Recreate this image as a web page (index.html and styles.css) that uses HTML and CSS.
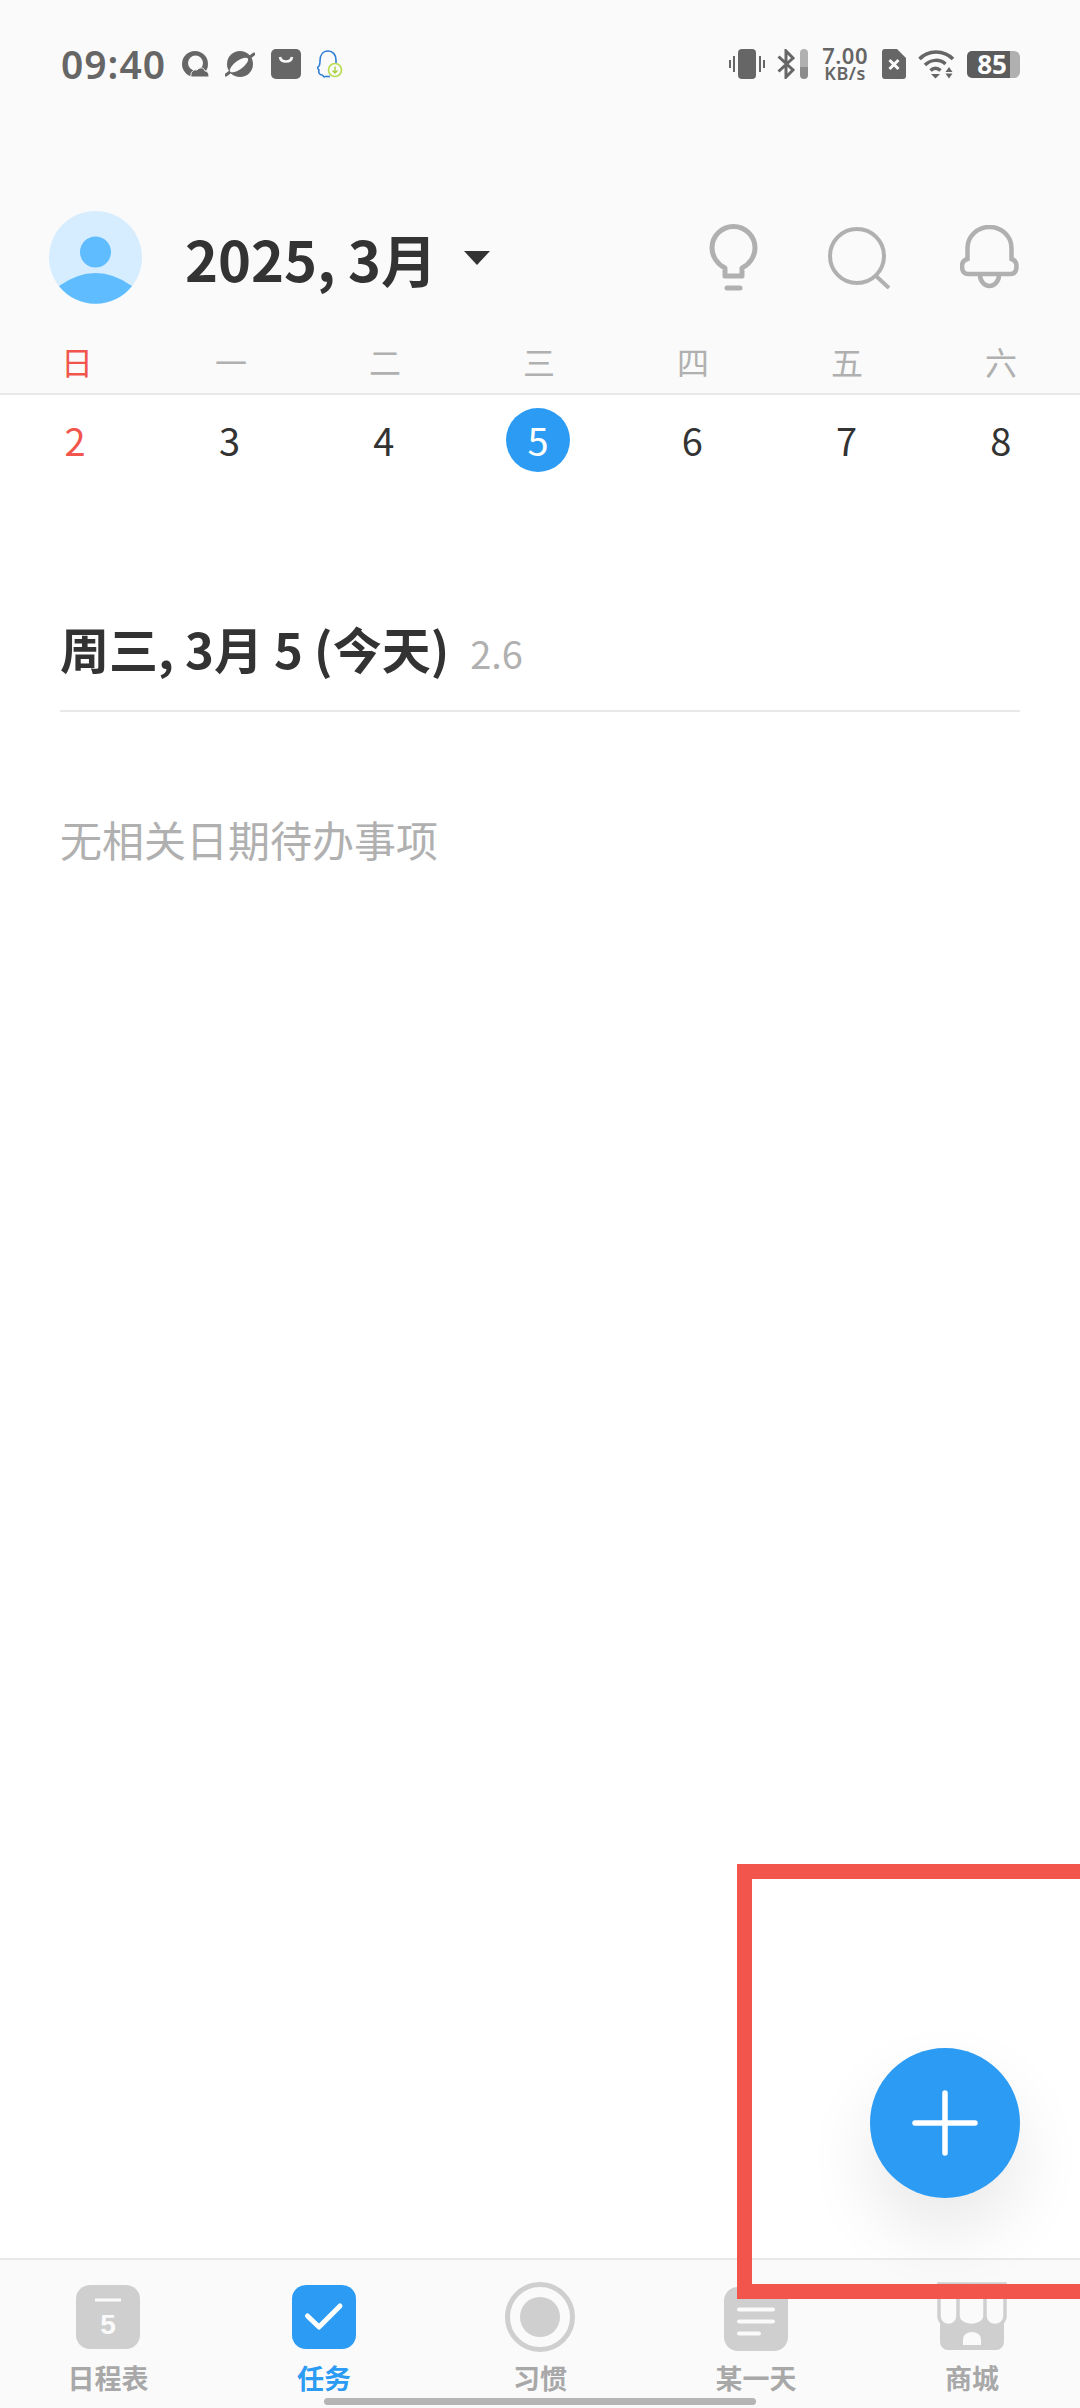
FILE: index.html
```html
<!DOCTYPE html>
<html lang="zh-CN">
<head>
<meta charset="utf-8">
<title>任务</title>
<link rel="stylesheet" href="styles.css">
</head>
<body>
<div class="app">
  <header class="top">
    <div class="status">
      <div class="status-left">
        <span class="time">09:40</span>
        <svg class="s-icon" width="27" height="26" viewBox="0 0 27 26"><circle cx="13" cy="13" r="13" fill="#666"/><circle cx="13.500" cy="12" r="7.500" fill="#fafafa"/><path d="M9 26c-1-5 3-8 6-7 2-3 7-3 8 1 3 0 4 3 4 6z" fill="#666" stroke="#fafafa" stroke-width="1"/></svg>
        <svg class="s-icon" width="30" height="26" viewBox="0 0 30 26"><circle cx="15" cy="13" r="13" fill="#666"/><path d="M1 24 29 3" stroke="#666" stroke-width="3" stroke-linecap="round"/><ellipse cx="14" cy="14" rx="11" ry="4.200" transform="rotate(-36 14 14)" fill="#fafafa"/></svg>
        <svg class="s-icon" width="30" height="30" viewBox="0 0 30 30"><rect width="30" height="30" rx="5" fill="#666"/><path d="M9 8c1 6 11 6 12 0" fill="none" stroke="#fafafa" stroke-width="2.600"/></svg>
        <svg class="s-icon qq" width="28" height="28" viewBox="0 0 28 28"><path d="M9 27c-2 0-2-2-3-2-2 0-4-2-3-5-1-1-2-2-1-3 2-1 2-3 2-6C4 5 7 1 12 1c5 0 8 4 8 9v4" fill="none" stroke="#2f7fd6" stroke-width="1.600"/><path d="M9 26.500h5" stroke="#2f7fd6" stroke-width="1.600"/><circle cx="19" cy="20" r="6.500" fill="#fafafa" stroke="#b9dc55" stroke-width="1.700"/><path d="M19 16.500v6M16.500 20.500l2.500 2.500 2.500-2.500" fill="none" stroke="#a8d03f" stroke-width="1.400"/></svg>
      </div>
      <div class="status-right">
        <svg width="36" height="30" viewBox="0 0 36 30"><rect x="9" width="18" height="30" rx="4" fill="#666"/><path d="M5 7v16M1 11v8M31 7v16M35 11v8" stroke="#666" stroke-width="2"/></svg>
        <span class="bt">
          <svg width="18" height="30" viewBox="0 0 18 30"><path d="M1.500 7.500 16 21 9 28V2l7 7L1.500 22.500" fill="none" stroke="#666" stroke-width="3"/></svg>
          <span class="bt-bar"></span>
        </span>
        <span class="speed"><span class="speed-num">7.00</span><span class="speed-unit">KB/s</span></span>
        <svg width="24" height="30" viewBox="0 0 24 30"><path d="M3 0h12l9 9v18a3 3 0 0 1-3 3H3a3 3 0 0 1-3-3V3a3 3 0 0 1 3-3z" fill="#666"/><path d="M7.500 11 16.500 20M16.500 11 7.500 20" stroke="#fafafa" stroke-width="3"/></svg>
        <svg width="37" height="29" viewBox="0 0 37 29"><path d="M1.500 9C10-.5 26-.5 35 9" fill="none" stroke="#666" stroke-width="3.500"/><path d="M7 15c6-6 15-6 20.500-1" fill="none" stroke="#666" stroke-width="3.500"/><path d="M12.500 20.500c3-3 7-3 10 0" fill="none" stroke="#666" stroke-width="3.500"/><path d="M13 24h9l-4.500 4.500zM31 17l3.500 5h-7zM27.500 23.500h7L31 28.500z" fill="#666"/></svg>
        <span class="battery"><span class="battery-level">85</span><span class="battery-tip"></span></span>
      </div>
    </div>
    <div class="title-row">
      <svg class="avatar" width="93" height="93" viewBox="0 0 93 93"><circle cx="46.500" cy="46.500" r="46.500" fill="#d6edff"/><circle cx="46.500" cy="41" r="15.500" fill="#5fbdff"/><path d="M10 75Q46.500 49 83 75A46.500 46.500 0 0 1 10 75z" fill="#5fbdff"/></svg>
      <h1 class="title">2025, 3月</h1>
      <span class="caret"></span>
      <div class="actions">
        <svg width="49" height="68" viewBox="0 0 49 68"><path d="M16 44C8 40 3 32 3 24a21.500 21.500 0 0 1 43 0c0 8-5 16-13 20v8H16z" fill="none" stroke="#b0b0b0" stroke-width="5" stroke-linejoin="round"/><path d="M18 64h13" stroke="#b0b0b0" stroke-width="5" stroke-linecap="round"/></svg>
        <svg width="62" height="62" viewBox="0 0 62 62"><circle cx="29" cy="29" r="27" fill="none" stroke="#b0b0b0" stroke-width="4"/><path d="M48 49 61 61" stroke="#b0b0b0" stroke-width="4"/></svg>
        <svg width="59" height="66" viewBox="0 0 59 66"><path d="M7.500 34V23a22 21 0 0 1 44 0v11c3 1 5 3 5 7 0 5-2 8-6 8H8c-4 0-6-3-6-8 0-4 2-6 5.500-7z" fill="none" stroke="#b0b0b0" stroke-width="4.500"/><path d="M20 50a9.500 11 0 0 0 19 0" fill="none" stroke="#b0b0b0" stroke-width="4.500"/></svg>
      </div>
    </div>
    <div class="weekdays">
      <span class="wd wd-sun">日</span><span class="wd">一</span><span class="wd">二</span><span class="wd">三</span><span class="wd">四</span><span class="wd">五</span><span class="wd">六</span>
    </div>
  </header>

  <main class="content">
    <div class="dates">
      <span class="date date-sun">2</span><span class="date">3</span><span class="date">4</span><span class="date"><span class="today-dot">5</span></span><span class="date">6</span><span class="date">7</span><span class="date">8</span>
    </div>
    <section class="today">
      <h2 class="today-head">周三, 3月 5 (今天)<span class="today-score">2.6</span></h2>
      <p class="empty">无相关日期待办事项</p>
    </section>
  </main>

  <nav class="tabs">
    <div class="tab">
      <svg width="70" height="70" viewBox="0 0 70 70"><rect x="3" y="3" width="64" height="64" rx="14" fill="#cfcfcf"/><path d="M22 18h26" stroke="#fafafa" stroke-width="3"/><text x="35" y="52" text-anchor="middle" class="cal-num">5</text></svg>
      <span class="tab-label">日程表</span>
    </div>
    <div class="tab tab-on">
      <svg width="70" height="70" viewBox="0 0 70 70"><rect x="3" y="3" width="64" height="64" rx="14" fill="#2b9bf4"/><path d="M18.500 34 30 45 51 24" fill="none" stroke="#fff" stroke-width="5" stroke-linecap="round" stroke-linejoin="round"/></svg>
      <span class="tab-label">任务</span>
    </div>
    <div class="tab">
      <svg width="70" height="70" viewBox="0 0 70 70"><circle cx="35" cy="35" r="32.500" fill="none" stroke="#cfcfcf" stroke-width="5"/><circle cx="35" cy="35" r="20" fill="#cfcfcf"/></svg>
      <span class="tab-label">习惯</span>
    </div>
    <div class="tab">
      <svg width="70" height="70" viewBox="0 0 70 70"><rect x="3" y="5" width="64" height="64" rx="14" fill="#cfcfcf"/><path d="M18 27.500h34M18 39.500h34M18 51.500h20" stroke="#fafafa" stroke-width="4" stroke-linecap="round"/></svg>
      <span class="tab-label">某一天</span>
    </div>
    <div class="tab">
      <svg width="70" height="70" viewBox="0 0 70 70"><path d="M3 32h64v28a8 8 0 0 1-8 8H11a8 8 0 0 1-8-8z" fill="#cfcfcf"/><path d="M2 2h19v32a9.500 9.500 0 0 1-19 0zM21 2h27v32a13.500 9.500 0 0 1-27 0zM48 2h20v32a10 9.500 0 0 1-20 0z" fill="#fafafa" stroke="#cfcfcf" stroke-width="3.500"/><path d="M26 63v-6a9 7 0 0 1 18 0v6z" fill="#fafafa"/></svg>
      <span class="tab-label">商城</span>
    </div>
  </nav>

  <div class="mark"></div>
  <button class="fab" type="button" aria-label="添加">
    <svg width="66" height="66" viewBox="0 0 66 66"><path d="M33 3v60M3 33h60" stroke="#fff" stroke-width="5.500" stroke-linecap="round"/></svg>
  </button>
  <div class="home-bar"></div>
</div>
</body>
</html>
```

FILE: styles.css
```css
* { box-sizing: border-box; }
html, body { margin: 0; padding: 0; }
body { background: #fff; font-family: "Noto Sans CJK SC", "Noto Sans", sans-serif; }
svg { display: block; flex: none; }

.app {
  position: relative;
  width: 1080px;
  height: 2408px;
  overflow: hidden;
  display: flex;
  flex-direction: column;
}

.top { background: #fafafa; border-bottom: 2px solid #e8e8e8; height: 395px; }

.status {
  height: 128px;
  padding: 0 60px 0 61px;
  display: flex;
  align-items: center;
  justify-content: space-between;
}
.status-left { display: flex; align-items: center; gap: 16px; }
.status-right { display: flex; align-items: center; gap: 12px; }
.time {
  font-family: "Noto Sans", sans-serif;
  font-size: 39px;
  font-weight: 600;
  letter-spacing: 1px;
  color: #666;
  line-height: 44px;
}
.qq { margin-left: -1px; }
.bt { display: flex; gap: 5px; align-items: center; }
.bt-bar {
  width: 8px;
  height: 30px;
  border-radius: 4px;
  background: linear-gradient(#b0b0b0 0 60%, #8c8c8c 60%);
}
.speed {
  display: flex;
  flex-direction: column;
  align-items: center;
  margin: 0 2px;
  font-family: "Noto Sans", sans-serif;
  font-weight: 600;
  color: #666;
}
.speed-num { font-size: 22px; line-height: 19px; letter-spacing: 0.500px; }
.speed-unit { font-size: 18px; line-height: 17px; letter-spacing: 0.500px; }
.battery { display: flex; align-items: center; }
.battery-level {
  width: 43px;
  height: 27px;
  border-radius: 5px 0 0 5px;
  background: #5c5c5c;
  color: #fff;
  font-family: "Noto Sans", sans-serif;
  font-size: 26px;
  font-weight: 700;
  line-height: 27px;
  text-align: right;
  padding-right: 3px;
}
.battery-tip {
  width: 10px;
  height: 27px;
  border-radius: 0 6px 6px 0;
  background: #b0b0b0;
}

.title-row {
  margin-top: 83px;
  height: 93px;
  padding: 0 61px 0 49px;
  display: flex;
  align-items: center;
}
.title {
  margin: 0 0 0 43px;
  font-size: 56px;
  font-weight: 700;
  line-height: 70px;
  color: #333;
}
.caret {
  margin-left: 27px;
  width: 0;
  height: 0;
  border-left: 13px solid transparent;
  border-right: 13px solid transparent;
  border-top: 14px solid #333;
}
.actions { margin-left: auto; display: flex; align-items: center; gap: 70px; }

.weekdays {
  height: 89px;
  padding: 37px 2px 0 0;
  display: grid;
  grid-template-columns: repeat(7, 1fr);
}
.wd { font-size: 32px; line-height: 40px; text-align: center; color: #b0b0b0; }
.wd-sun { color: #f1554c; }

.content { flex: 1; background: #fff; }
.dates {
  margin-left: -2px;
  width: 1080px;
  padding-top: 13px;
  display: grid;
  grid-template-columns: repeat(7, 1fr);
}
.date {
  height: 64px;
  padding-bottom: 2px;
  display: flex;
  align-items: center;
  justify-content: center;
  font-size: 38px;
  color: #333;
}
.date-sun { color: #f1554c; }
.today-dot {
  width: 64px;
  height: 64px;
  margin-bottom: -2px;
  padding-bottom: 2px;
  border-radius: 50%;
  background: #2b9bf4;
  color: #fff;
  display: flex;
  align-items: center;
  justify-content: center;
}

.today { padding: 0 60px; margin-top: 146px; }
.today-head {
  margin: 0;
  height: 94px;
  border-bottom: 2px solid #e8e8e8;
  font-size: 49px;
  font-weight: 700;
  line-height: 60px;
  color: #333;
}
.today-score {
  margin-left: 21px;
  font-size: 38px;
  font-weight: 400;
  color: #b0b0b0;
}
.empty {
  margin: 102px 0 0;
  font-size: 42px;
  line-height: 50px;
  color: #b0b0b0;
}

.tabs {
  height: 150px;
  background: #fafafa;
  border-top: 2px solid #e8e8e8;
  padding-top: 22px;
  display: grid;
  grid-template-columns: repeat(5, 1fr);
}
.tab { display: flex; flex-direction: column; align-items: center; }
.tab-label {
  margin-top: 10px;
  font-size: 27px;
  font-weight: 700;
  line-height: 32px;
  color: #a8a8a8;
}
.tab-on .tab-label { color: #2b9bf4; }
.cal-num { font-family: "Liberation Sans", sans-serif; font-size: 28px; font-weight: 700; fill: #fafafa; }

.mark {
  position: absolute;
  left: 737px;
  top: 1864px;
  width: 400px;
  height: 435px;
  border: 15px solid #f1554c;
}
.fab {
  position: absolute;
  left: 870px;
  top: 2048px;
  width: 150px;
  height: 150px;
  padding: 0;
  border: 0;
  border-radius: 50%;
  background: #2b9bf4;
  box-shadow: 0 35px 70px rgba(0, 0, 0, 0.09);
  display: flex;
  align-items: center;
  justify-content: center;
}
.home-bar {
  position: absolute;
  left: 324px;
  top: 2398px;
  width: 432px;
  height: 7px;
  border-radius: 4px;
  background: #b5b5b5;
}
```
